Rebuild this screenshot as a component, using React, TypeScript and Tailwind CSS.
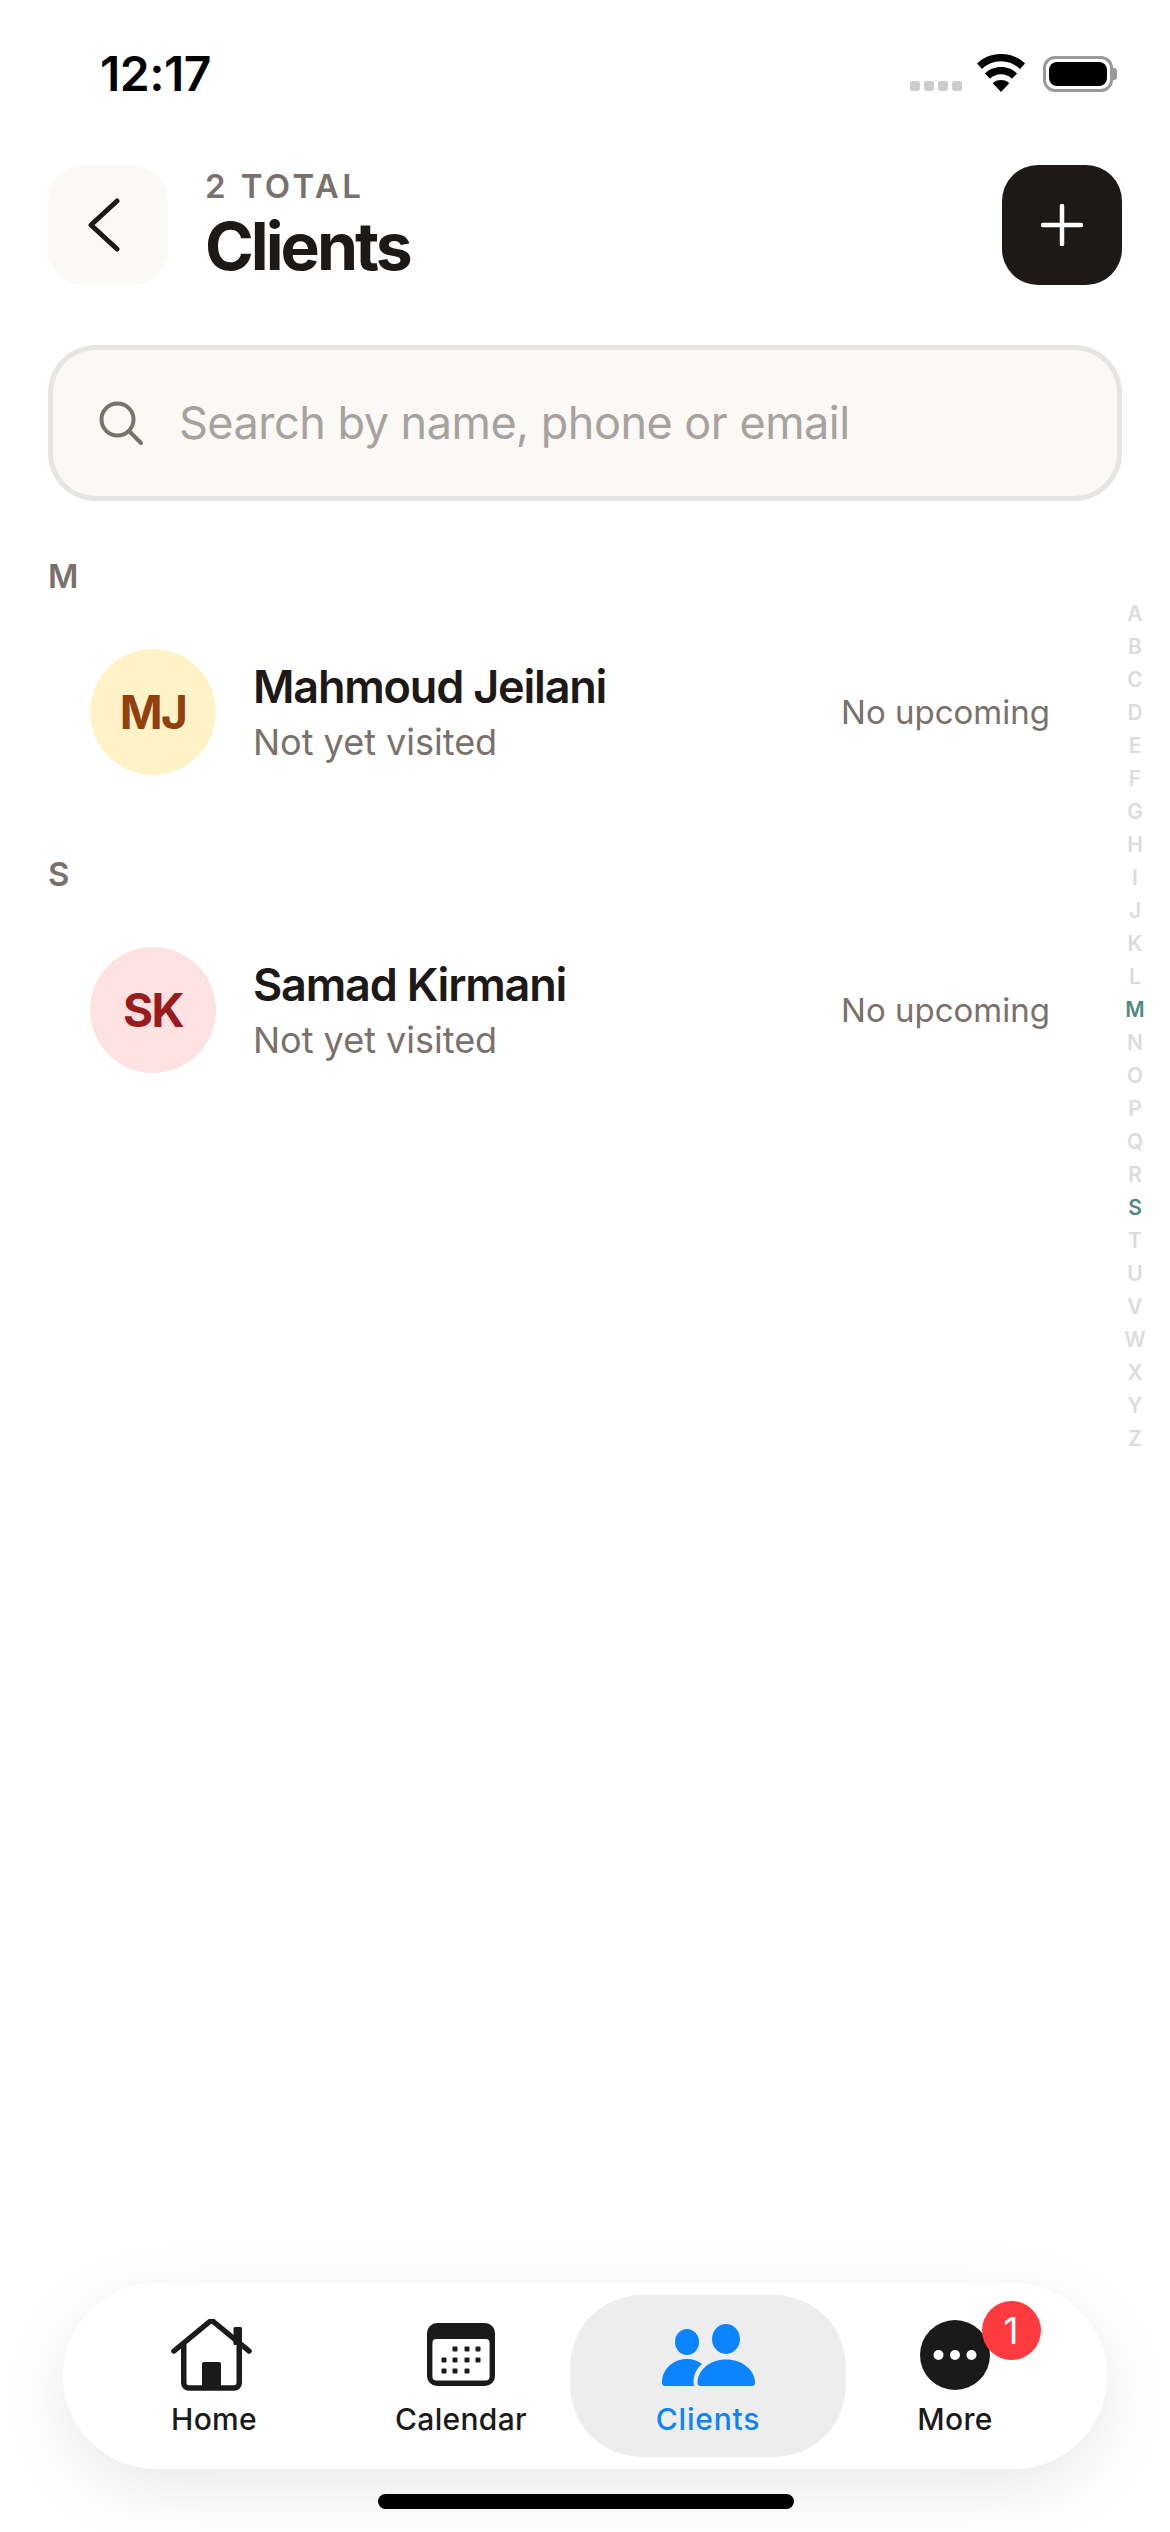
const letters = "ABCDEFGHIJKLMNOPQRSTUVWXYZ".split("");

function StatusBar() {
  return (
    <div className="flex h-[165px] justify-between pl-[100px] pr-[53px] pt-[48px]">
      <span className="text-[48px] leading-[52px] font-semibold text-black tracking-[-0.5px]">12:17</span>
      <div className="flex h-[52px] items-center">
        <div className="mt-[24px] mr-[14px] flex gap-[4px]">
          <div className="h-[10px] w-[10px] rounded-[3px] bg-[#cccccc]" />
          <div className="h-[10px] w-[10px] rounded-[3px] bg-[#cccccc]" />
          <div className="h-[10px] w-[10px] rounded-[3px] bg-[#cccccc]" />
          <div className="h-[10px] w-[10px] rounded-[3px] bg-[#cccccc]" />
        </div>
        <svg width="50" height="38" viewBox="0 0 50 38" className="mb-[2px]">
          <path d="M25 0C15 0 7 3.600 1 9.500l5 5.500C11 10 17.500 7.200 25 7.200S39 10 44 15l5-5.500C43 3.600 35 0 25 0z" fill="#000" />
          <path d="M25 13c-6.500 0-12 2.400-16 6.400l5 5.400c2.800-2.800 6.700-4.500 11-4.500s8.200 1.700 11 4.500l5-5.400C37 15.400 31.500 13 25 13z" fill="#000" />
          <path d="M25 26c-3.300 0-6.200 1.200-8.200 3.200L25 38l8.200-8.800C31.200 27.200 28.300 26 25 26z" fill="#000" />
        </svg>
        <div className="ml-[17px] flex items-center">
          <div className="h-[36px] w-[70px] rounded-[12px] border-[3px] border-[#9a9a9a] p-[3px]">
            <div className="h-full w-full rounded-[8px] bg-black" />
          </div>
          <div className="h-[12px] w-[4px] rounded-r-[3px] bg-[#9a9a9a]" />
        </div>
      </div>
    </div>
  );
}

function Header() {
  return (
    <div className="flex items-center justify-between px-[48px]">
      <div className="flex items-center gap-[37px]">
        <button className="flex h-[120px] w-[120px] items-center justify-center rounded-[36px] bg-[#faf9f6]">
          <svg width="36" height="54" viewBox="0 0 36 54" fill="none" className="mr-[8px]">
            <path d="M31 3L5 27l26 24" stroke="#1c1917" strokeWidth="5" strokeLinecap="round" strokeLinejoin="round" />
          </svg>
        </button>
        <div className="flex flex-col">
          <span className="text-[33px] leading-[40px] font-semibold tracking-[3.4px] text-[#78716c]">2 TOTAL</span>
          <span className="mt-[2px] text-[66px] leading-[76px] font-bold tracking-[-3px] text-[#1c1917]">Clients</span>
        </div>
      </div>
      <button className="flex h-[120px] w-[120px] items-center justify-center rounded-[36px] bg-[#1c1917]">
        <svg width="42" height="42" viewBox="0 0 42 42" fill="none">
          <path d="M21 2v38M2 21h38" stroke="#fff" strokeWidth="4.500" strokeLinecap="round" />
        </svg>
      </button>
    </div>
  );
}

function SearchBox() {
  return (
    <div className="mx-[48px] mt-[60px] flex h-[156px] items-center rounded-[48px] border-[5px] border-[#e7e5e4] bg-[#faf9f6] pl-[46px]">
      <svg width="44" height="44" viewBox="0 0 44 44" fill="none">
        <circle cx="18.500" cy="18.500" r="16" stroke="#78716c" strokeWidth="4" />
        <path d="M30 30l12 12" stroke="#78716c" strokeWidth="4" strokeLinecap="round" />
      </svg>
      <span className="ml-[36px] text-[45px] leading-[60px] tracking-[-0.5px] text-[#a8a29e]">Search by name, phone or email</span>
    </div>
  );
}

function ClientRow({ initials, name, bg, color }: { initials: string; name: string; bg: string; color: string }) {
  return (
    <div className="flex items-center pl-[90px] pr-[120px]">
      <div className={`flex h-[126px] w-[126px] items-center justify-center rounded-full text-[46px] font-bold tracking-[-1.5px] ${bg} ${color}`}>
        {initials}
      </div>
      <div className="ml-[37px] flex-1">
        <div className="text-[45px] leading-[54px] font-semibold tracking-[-1.2px] text-[#1c1917]">{name}</div>
        <div className="mt-[6px] text-[36px] leading-[44px] text-[#78716c]">Not yet visited</div>
      </div>
      <span className="text-[33px] leading-[40px] text-[#78716c]">No upcoming</span>
    </div>
  );
}

function AlphaIndex() {
  return (
    <div className="absolute top-[597px] right-[13px] flex w-[44px] flex-col items-center">
      {letters.map((l) => (
        <span
          key={l}
          className={`h-[33px] text-[21px] leading-[33px] font-semibold ${l === "M" || l === "S" ? "text-[#4f8a80]" : "text-[#dddcda]"}`}
        >
          {l}
        </span>
      ))}
    </div>
  );
}

function TabItem({ label, active, icon }: { label: string; active?: boolean; icon: React.ReactNode }) {
  return (
    <div className={`flex h-[162px] flex-col items-center ${active ? "-mx-[14.500px] w-[276px] rounded-[72px] bg-[#ededed]" : "w-[247px]"}`}>
      <div className="flex h-[100px] items-end justify-center">{icon}</div>
      <span className={`mt-[5px] text-[30px] leading-[38px] font-medium ${active ? "tracking-[0.8px] text-[#0a84ff]" : "tracking-[0.3px] text-[#1a1a1a]"}`}>{label}</span>
    </div>
  );
}

function TabBar() {
  return (
    <div className="absolute bottom-[63px] left-[63px] flex h-[186px] w-[1044px] items-center rounded-[93px] bg-white pl-[27.500px] shadow-[0_20px_70px_rgba(0,0,0,0.09)]">
      <TabItem
        label="Home"
        icon={
          <svg width="81" height="72" viewBox="0 0 81 72" fill="none" className="mr-[5px] mb-[4px]">
            <path d="M3 32L38.200 3a3.500 3.500 0 014.600 0L78 32" stroke="#1a1a1a" strokeWidth="5.500" strokeLinecap="round" strokeLinejoin="round" />
            <path d="M12.750 25v39a5 5 0 005 5h45.500a5 5 0 005-5V25" stroke="#1a1a1a" strokeWidth="5.500" />
            <rect x="62.500" y="8" width="8.500" height="18" rx="1.500" fill="#1a1a1a" />
            <rect x="31" y="43" width="19" height="26" rx="2" fill="#1a1a1a" />
          </svg>
        }
      />
      <TabItem
        label="Calendar"
        icon={
          <svg width="68" height="63" viewBox="0 0 68 63" className="mb-[9px]">
            <rect width="68" height="63" rx="10" fill="#1a1a1a" />
            <rect x="5.400" y="16" width="57.200" height="41.500" rx="4" fill="#fff" />
            <g fill="#1a1a1a">
              <rect x="25.500" y="23.500" width="5" height="5" rx="1" />
              <rect x="37.500" y="23.500" width="5" height="5" rx="1" />
              <rect x="48.500" y="23.500" width="5" height="5" rx="1" />
              <rect x="14.500" y="34.500" width="5" height="5" rx="1" />
              <rect x="25.500" y="34.500" width="5" height="5" rx="1" />
              <rect x="37.500" y="34.500" width="5" height="5" rx="1" />
              <rect x="48.500" y="34.500" width="5" height="5" rx="1" />
              <rect x="14.500" y="45.500" width="5" height="5" rx="1" />
              <rect x="25.500" y="45.500" width="5" height="5" rx="1" />
              <rect x="37.500" y="45.500" width="5" height="5" rx="1" />
            </g>
          </svg>
        }
      />
      <TabItem
        label="Clients"
        active
        icon={
          <svg width="93" height="63" viewBox="0 0 93 63" fill="#0a84ff" className="mb-[9px]">
            <ellipse cx="25" cy="19" rx="12" ry="13" />
            <ellipse cx="64" cy="16" rx="14" ry="15" />
            <path d="M0 60C0 46 11 36 25 36c5.500 0 11 1.500 15 5-5.500 4.500-8.500 11-8.500 18 0 1.500.4 3 1 4H3a3 3 0 01-3-3z" />
            <path d="M35.500 60C35.500 47 48 36.500 64 36.500S93 47 93 60a3 3 0 01-3 3H38.500a3 3 0 01-3-3z" />
          </svg>
        }
      />
      <div className="relative">
        <TabItem
          label="More"
          icon={
            <svg width="70" height="70" viewBox="0 0 70 70" className="mb-[5px]">
              <circle cx="35" cy="35" r="35" fill="#1a1a1a" />
              <circle cx="18.500" cy="35" r="5" fill="#fff" />
              <circle cx="35" cy="35" r="5" fill="#fff" />
              <circle cx="51.500" cy="35" r="5" fill="#fff" />
            </svg>
          }
        />
        <div className="absolute top-[6px] left-[150px] flex h-[59px] w-[59px] items-center justify-center rounded-full bg-[#ff3b40] text-[37px] leading-none text-white">
          1
        </div>
      </div>
    </div>
  );
}

export default function App() {
  return (
    <div className="relative h-[2532px] w-[1170px] overflow-hidden bg-white font-['Inter',sans-serif]">
      <StatusBar />
      <Header />
      <SearchBox />
      <div className="mt-[55px] pl-[48px] text-[33px] leading-[40px] font-semibold text-[#78716c]">M</div>
      <div className="mt-[53px]">
        <ClientRow initials="MJ" name="Mahmoud Jeilani" bg="bg-[#fef3c7]" color="text-[#92400e]" />
      </div>
      <div className="mt-[79px] pl-[48px] text-[33px] leading-[40px] font-semibold text-[#78716c]">S</div>
      <div className="mt-[53px]">
        <ClientRow initials="SK" name="Samad Kirmani" bg="bg-[#fee2e2]" color="text-[#991b1b]" />
      </div>
      <AlphaIndex />
      <TabBar />
      <div className="absolute bottom-[23px] left-[378px] h-[15px] w-[416px] rounded-full bg-black" />
    </div>
  );
}
